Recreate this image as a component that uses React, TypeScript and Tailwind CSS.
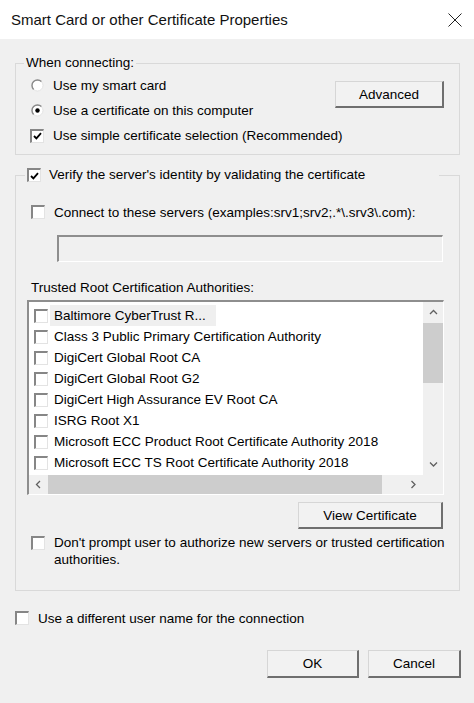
import React from "react";

const certs = [
  "Baltimore CyberTrust R...",
  "Class 3 Public Primary Certification Authority",
  "DigiCert Global Root CA",
  "DigiCert Global Root G2",
  "DigiCert High Assurance EV Root CA",
  "ISRG Root X1",
  "Microsoft ECC Product Root Certificate Authority 2018",
  "Microsoft ECC TS Root Certificate Authority 2018",
];

function Checkbox({ checked = false }: { checked?: boolean }) {
  return (
    <span className="flex h-[14px] w-[14px] shrink-0 items-center justify-center border-t-2 border-l-2 border-r border-b border-t-[#868686] border-l-[#868686] border-r-[#e3e3e3] border-b-[#e3e3e3] bg-white">
      {checked && (
        <svg width="9" height="8" viewBox="0 0 9 8">
          <path d="M1 4 L3.4 6.4 L8 1.2" stroke="#000" strokeWidth="1.8" fill="none" />
        </svg>
      )}
    </span>
  );
}

function Radio({ checked = false }: { checked?: boolean }) {
  return (
    <svg width="13" height="13" viewBox="0 0 13 13" className="shrink-0">
      <circle cx="6.5" cy="6.5" r="5.5" fill="#fff" stroke="#e3e3e3" strokeWidth="1" />
      <path d="M2.6 10.4 A5.5 5.5 0 0 1 10.4 2.6" stroke="#8a8a8a" strokeWidth="1.4" fill="none" />
      {checked && <circle cx="6.5" cy="6.5" r="2.2" fill="#000" />}
    </svg>
  );
}

function WinButton({ children, className = "" }: { children: React.ReactNode; className?: string }) {
  return (
    <button
      className={`flex items-center justify-center border border-[#d6d6d6] border-r-2 border-b-2 border-r-[#6f6f6f] border-b-[#6f6f6f] bg-[#f2f2f2] text-[13.5px] text-black ${className}`}
    >
      {children}
    </button>
  );
}

function Chevron({ dir }: { dir: "up" | "down" | "left" | "right" }) {
  const paths = {
    up: "M1 5 L4.5 1.5 L8 5",
    down: "M1 1.5 L4.5 5 L8 1.5",
    left: "M5 1 L1.5 4.5 L5 8",
    right: "M1.5 1 L5 4.5 L1.5 8",
  };
  const horiz = dir === "up" || dir === "down";
  return (
    <svg width={horiz ? 9 : 7} height={horiz ? 7 : 9} viewBox={horiz ? "0 0 9 7" : "0 0 7 9"}>
      <path d={paths[dir]} stroke="#606060" strokeWidth="1.3" fill="none" />
    </svg>
  );
}

export default function App() {
  return (
    <div className="h-[703px] w-[474px] overflow-hidden whitespace-nowrap bg-[#f0f0f0] font-['Liberation_Sans',Arial,sans-serif] text-[13.5px] leading-[17px] text-black">
      {/* title bar */}
      <div className="flex h-[39px] items-center justify-between bg-white pl-[11px] pr-[12px]">
        <span className="text-[15px] text-[#111]">Smart Card or other Certificate Properties</span>
        <svg width="14" height="14" viewBox="0 0 14 14">
          <path d="M0.5 0.5 L13.5 13.5 M13.5 0.5 L0.5 13.5" stroke="#222" strokeWidth="1" />
        </svg>
      </div>

      <div className="pl-[15px] pr-[14px]">
        {/* When connecting */}
        <fieldset className="mt-[16px] min-w-0 border border-[#d9d9d9] pb-[6px]">
          <legend className="ml-[8px] px-[2px] leading-[16px]">When connecting:</legend>
          <div className="flex pt-[2px]">
            <div className="min-w-0 flex-1">
              <div className="flex h-[25px] items-center pl-[15px]">
                <Radio />
                <span className="ml-[9px]">Use my smart card</span>
              </div>
              <div className="flex h-[25px] items-center pl-[15px]">
                <Radio checked />
                <span className="ml-[9px]">Use a certificate on this computer</span>
              </div>
              <div className="flex h-[25px] items-center pl-[14px]">
                <Checkbox checked />
                <span className="ml-[9px]">Use simple certificate selection (Recommended)</span>
              </div>
            </div>
            <div className="shrink-0 pt-[8px] pr-[15px]">
              <WinButton className="h-[27px] w-[109px]">Advanced</WinButton>
            </div>
          </div>
        </fieldset>

        {/* Verify server */}
        <fieldset className="mt-[12px] min-w-0 border border-[#d9d9d9] pr-[15px] pb-[22px]">
          <legend className="ml-[9px] w-[414px] leading-[16px]">
            <span className="flex items-center">
              <span className="ml-[2px]">
                <Checkbox checked />
              </span>
              <span className="ml-[8px]">Verify the server's identity by validating the certificate</span>
            </span>
          </legend>

          <div className="mt-[19px] flex h-[20px] items-center pl-[15px]">
            <Checkbox />
            <span className="ml-[9px]">Connect to these servers (examples:srv1;srv2;.*\.srv3\.com):</span>
          </div>

          <div className="mt-[13px] ml-[41px] mr-[1px] h-[27px] border-t-2 border-l-2 border-r border-b border-t-[#8e8e8e] border-l-[#8e8e8e] border-r-white border-b-white bg-[#f0f0f0]" />

          <div className="mt-[16px] flex h-[18px] items-center pl-[15px]">Trusted Root Certification Authorities:</div>

          <div className="mt-[4px] ml-[11px] flex flex-col border-t-2 border-l-2 border-r border-b border-t-[#8e8e8e] border-l-[#8e8e8e] border-r-white border-b-white bg-white">
            <div className="flex h-[173px]">
              <div className="min-w-0 flex-1 overflow-hidden pt-[3px]">
                {certs.map((c, i) => (
                  <div key={c} className="flex h-[21px] items-center pl-[5px]">
                    <Checkbox />
                    <span
                      className={`ml-[2px] flex h-[21px] items-center pl-[4px] pr-[10px] ${
                        i === 0 ? "bg-[#efefef]" : ""
                      }`}
                    >
                      {c}
                    </span>
                  </div>
                ))}
              </div>
              <div className="flex w-[20px] shrink-0 flex-col bg-[#f0f0f0]">
                <div className="flex h-[21px] items-center justify-center">
                  <Chevron dir="up" />
                </div>
                <div className="h-[60px] bg-[#cdcdcd]" />
                <div className="flex-1" />
                <div className="flex h-[21px] items-center justify-center">
                  <Chevron dir="down" />
                </div>
              </div>
            </div>
            <div className="flex h-[19px]">
              <div className="flex flex-1 bg-[#f0f0f0]">
                <div className="flex w-[19px] items-center justify-center">
                  <Chevron dir="left" />
                </div>
                <div className="w-[334px] bg-[#cdcdcd]" />
                <div className="flex-1" />
                <div className="flex w-[20px] items-center justify-center">
                  <Chevron dir="right" />
                </div>
              </div>
              <div className="w-[20px] bg-[#f0f0f0]" />
            </div>
          </div>

          <div className="mt-[7px] flex justify-end">
            <WinButton className="mr-[1px] h-[27px] w-[145px]">View Certificate</WinButton>
          </div>

          <div className="mt-[5px] flex items-start pl-[15px]">
            <span className="mt-[2px]">
              <Checkbox />
            </span>
            <span className="ml-[9px] flex flex-col">
              <span>Don't prompt user to authorize new servers or trusted certification</span>
              <span>authorities.</span>
            </span>
          </div>
        </fieldset>

        <div className="mt-[17px] flex h-[20px] items-center">
          <Checkbox />
          <span className="ml-[9px]">Use a different user name for the connection</span>
        </div>

        <div className="mt-[22px] -mr-[1px] flex justify-end gap-[9px]">
          <WinButton className="h-[28px] w-[92px]">OK</WinButton>
          <WinButton className="h-[28px] w-[93px]">Cancel</WinButton>
        </div>
      </div>
    </div>
  );
}
